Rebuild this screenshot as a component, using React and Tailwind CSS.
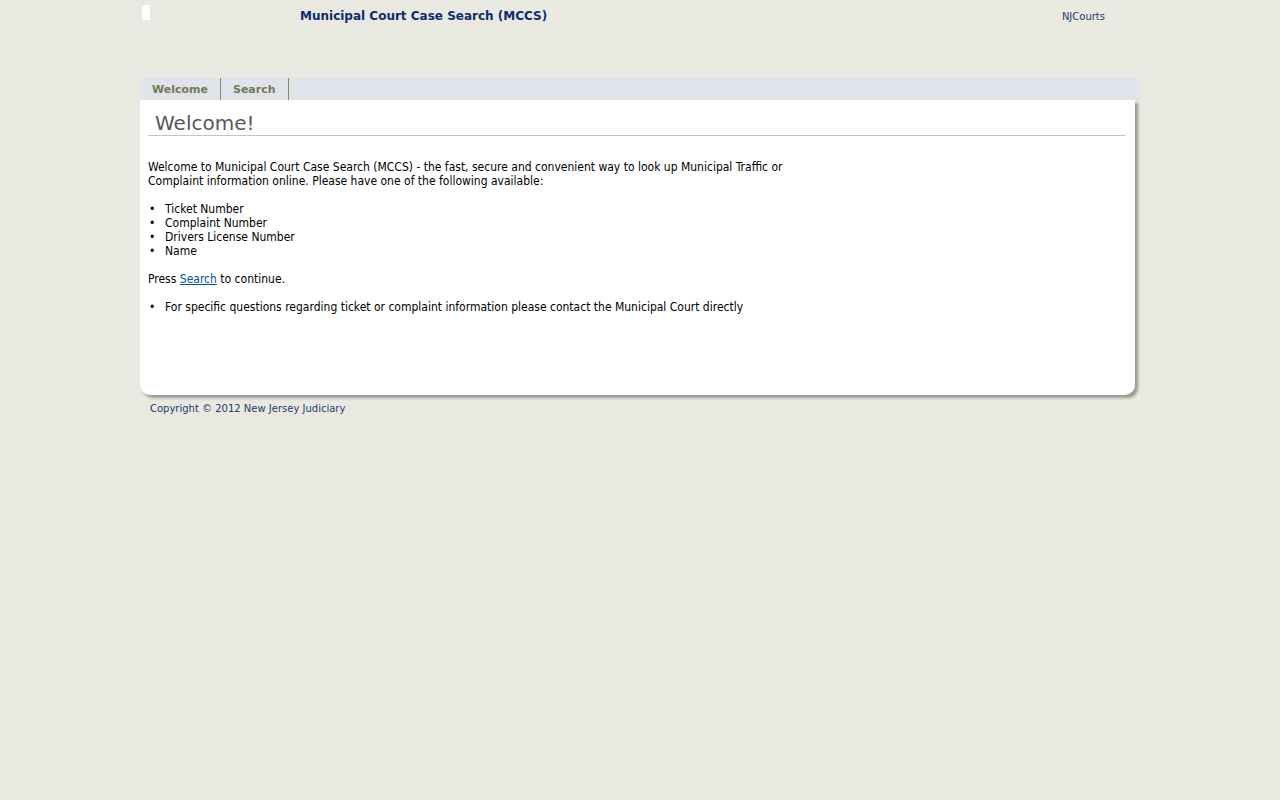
import React from "react";

const VERDANA = "font-['DejaVu_Sans',Verdana,sans-serif]";
const TAHOMA = "font-['DejaVu_Sans_Condensed',Tahoma,sans-serif]";

const ITEMS = ["Ticket Number", "Complaint Number", "Drivers License Number", "Name"];

function Header() {
  return (
    <div className="relative h-[78px]">
      <div className="absolute left-[2px] top-[5px] w-[8px] h-[15px] bg-white rounded-tl-[4px]"></div>
      <div className="flex items-start pt-[7px]">
        <h1 className={`ml-[160px] text-[12px] font-bold text-[#0c2c6e] ${VERDANA}`}>
          Municipal Court Case Search (MCCS)
        </h1>
        <a className={`ml-auto mr-[35px] mt-[2px] text-[10px] text-[#1f3a6e] ${VERDANA}`} href="#">
          NJCourts
        </a>
      </div>
    </div>
  );
}

function Tabs() {
  return (
    <div className={`flex h-[22px] bg-[#dfe3ea] ${VERDANA}`}>
      {["Welcome", "Search"].map((tab) => (
        <div
          key={tab}
          className="flex items-center pt-[2px] px-[12px] border-r border-[#8a8570] text-[11px] font-bold text-[#7a7657]"
        >
          {tab}
        </div>
      ))}
    </div>
  );
}

function Bullet({ children }) {
  return (
    <li className="flex">
      <span className="w-[17px] shrink-0 pl-[1px]">•</span>
      <span>{children}</span>
    </li>
  );
}

export default function App() {
  return (
    <div className="min-h-[800px] bg-[#e9e9e1]">
      <div className="w-[1000px] mx-auto">
        <Header />
        <Tabs />
        <div className="h-[295px] mr-[5px] bg-white rounded-b-[10px] shadow-[3px_3px_3px_rgba(0,0,0,0.35)] pl-[8px] pr-[9px] pt-[12px]">
          <h2 className={`pl-[7px] pb-[1px] text-[20px] leading-[22px] text-[#585858] border-b border-[#c4c4c4] ${VERDANA}`}>
            Welcome!
          </h2>
          <div className={`mt-[24px] text-[12px] leading-[14px] text-black ${TAHOMA}`}>
            <p>
              Welcome to Municipal Court Case Search (MCCS) - the fast, secure and convenient way to look up Municipal Traffic or
              <br />
              Complaint information online. Please have one of the following available:
            </p>
            <ul className="mt-[14px]">
              {ITEMS.map((item) => (
                <Bullet key={item}>{item}</Bullet>
              ))}
            </ul>
            <p className="mt-[14px]">
              Press{" "}
              <a href="#" className="text-[#00529b] underline">
                Search
              </a>{" "}
              to continue.
            </p>
            <ul className="mt-[14px]">
              <Bullet>For specific questions regarding ticket or complaint information please contact the Municipal Court directly</Bullet>
            </ul>
          </div>
        </div>
        <div className={`pl-[10px] pt-[6px] text-[10px] text-[#1f3a6e] ${VERDANA}`}>
          Copyright © 2012 New Jersey Judiciary
        </div>
      </div>
    </div>
  );
}
